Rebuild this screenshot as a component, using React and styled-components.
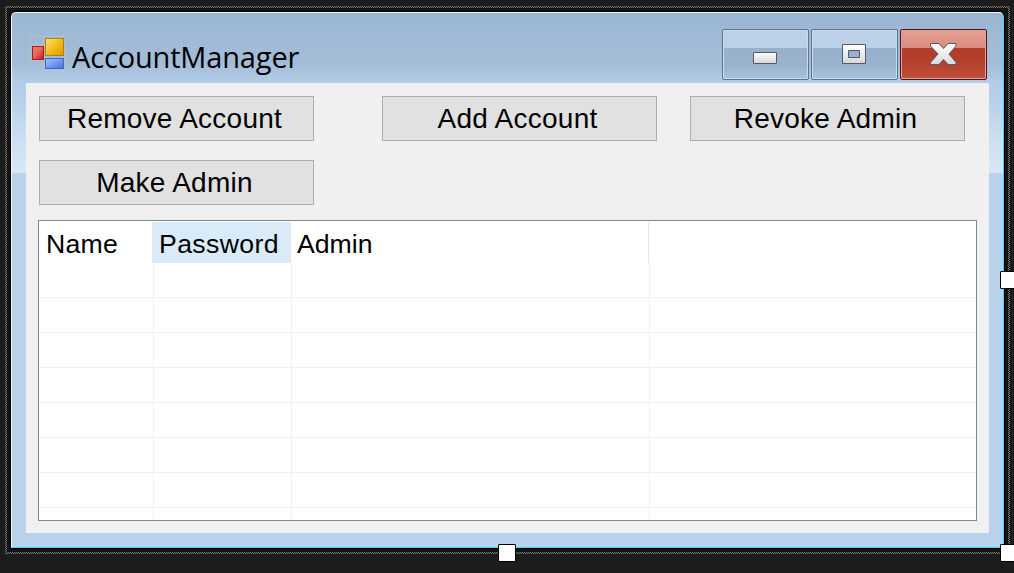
import React from 'react';
import styled, { createGlobalStyle } from 'styled-components';

const GlobalStyle = createGlobalStyle`
  *, *::before, *::after { box-sizing: border-box; }
  body { margin: 0; background: #1c1c1c; overflow: hidden; }
`;

const Surface = styled.main`
  position: relative;
  width: 1014px;
  height: 573px;
  overflow: hidden;
  padding: 6px 4px 19px 5px;
  background: #1c1c1c;
  font-family: 'Liberation Sans', Arial, sans-serif;
  color: #000;
`;

const Selection = styled.div`
  height: 548px;
  padding: 6px;
  background:
    linear-gradient(#141414, #141414) 2px 2px / calc(100% - 4px) calc(100% - 4px) no-repeat,
    repeating-conic-gradient(#777 0 25%, #1c1c1c 0 50%) 0 0 / 2px 2px;
`;

const Window = styled.section`
  display: flex;
  flex-direction: column;
  height: 536px;
  border: 1px solid;
  border-color: #f4faff #45d8f5 #45d8f5 #f4faff;
  border-radius: 5px 5px 0 0;
  padding: 0 14px 14px 14px;
  box-shadow: 0 0 0 1px #000;
  background: linear-gradient(
    #9ab6d4 0,
    #a2bbd7 37px,
    #a3bdd9 51px,
    #b3cde8 69px,
    #b8d1ea 89px,
    #cbdef1 124px,
    #dae7f5 159px,
    #b9d1ea 161px,
    #b9d1ea 100%
  );
`;

const TitleBar = styled.header`
  display: flex;
  align-items: flex-start;
  flex: 0 0 70px;
  padding: 16px 2px 0 4px;
`;

const AppIcon = styled.svg`
  display: block;
  flex: none;
  margin-top: 7px;
`;

const Title = styled.h1`
  flex: 1;
  margin: 8px 0 0 7px;
  font: 400 29px/40px 'Open Sans', 'Noto Sans', sans-serif;
  letter-spacing: -0.16px;
  white-space: nowrap;
`;

const Controls = styled.div`
  display: flex;
  gap: 2px;
`;

const ControlButton = styled.button`
  display: block;
  width: 87px;
  height: 51px;
  padding: 0;
  border: 1px solid ${(p) => (p.$danger ? '#4b1520' : '#5d7391')};
  border-radius: 2px;
  box-shadow: inset 0 0 0 1px ${(p) => (p.$danger ? '#e6a196' : '#c8dcf0')};
  background: ${(p) =>
    p.$danger
      ? 'linear-gradient(#e3a094 0, #dc8b7e 18px, #b43d2a 18px, #b33e2b 30px, #c1503a 100%)'
      : 'linear-gradient(#bdd2e8 0, #bad0e7 18px, #98b0cc 18px, #99b2ce 35px, #a9c3df 100%)'};
  svg { display: block; }
`;

const Client = styled.div`
  flex: 1;
  padding: 13px 11px 12px 12px;
  background: #f0f0f0;
`;

const Actions = styled.div`
  display: grid;
  grid-template-columns: 275px 275px 275px;
  column-gap: 33px;
  row-gap: 19px;
  margin-left: 1px;
  margin-bottom: 15px;
`;

const ActionButton = styled.button`
  width: 275px;
  height: 45px;
  margin-left: ${(p) => p.$shift || 0}px;
  padding: 1px 4px 0 0;
  border: 1px solid #adadad;
  background: #e1e1e1;
  color: #000;
  font: 28px/42px 'Liberation Sans', Arial, sans-serif;
  letter-spacing: 0.25px;
  white-space: nowrap;
`;

const ListView = styled.div`
  display: flex;
  flex-direction: column;
  width: 939px;
  height: 301px;
  padding: 1px;
  border: 1px solid #828790;
  background: #fff;
`;

const HeaderRow = styled.div`
  display: grid;
  grid-template-columns: 112px 139px 358px 1fr;
  grid-template-rows: 41px;
  flex: 0 0 41px;
`;

const HeaderCell = styled.div`
  height: 41px;
  padding: 2px 0 0 ${(p) => p.$inset}px;
  border-right: ${(p) => (p.$divider ? '1px solid #e5e5e5' : 'none')};
  background: ${(p) => (p.$hot ? '#d9ebf9' : 'transparent')};
  font-size: 26.67px;
  line-height: 41px;
  letter-spacing: ${(p) => p.$tracking || 0}px;
  white-space: nowrap;
`;

const Rows = styled.div`
  flex: 1;
  overflow: hidden;
`;

const Row = styled.div`
  display: grid;
  grid-template-columns: 114px 138px 358px 1fr;
  height: 35px;
  border-bottom: 1px solid #f0f0f0;
`;

const Cell = styled.div`
  border-right: 1px solid ${(p) => (p.$last ? 'transparent' : '#f0f0f0')};
`;

const Handle = styled.i`
  position: absolute;
  left: ${(p) => p.$x}px;
  top: ${(p) => p.$y}px;
  width: 18px;
  height: 18px;
  border: 1px solid #000;
  border-radius: 1px;
  background: #fff;
`;

const FormIcon = () => (
  <AppIcon width="35" height="34" viewBox="0 0 35 34">
    <defs>
      <linearGradient id="gold" x2="1" y2="1">
        <stop stopColor="#ffe36c" /><stop offset=".5" stopColor="#f3bd18" /><stop offset="1" stopColor="#d99a00" />
      </linearGradient>
      <linearGradient id="red" x2="1" y2="1">
        <stop stopColor="#f08078" /><stop offset=".5" stopColor="#e2655d" /><stop offset="1" stopColor="#b51616" />
      </linearGradient>
      <linearGradient id="blue" x2="1" y2="1">
        <stop stopColor="#a3c4ff" /><stop offset="1" stopColor="#3f72e0" />
      </linearGradient>
    </defs>
    <path d="M.5 33.500V.500H34.500V33M13.500 1v9M1 9.500h13M1 24.500h13M13.500 24v9M1 32.500h13" fill="none" stroke="#b9bdc4" />
    <rect x="2.5" y="10.5" width="11" height="13" fill="url(#red)" stroke="#b5141d" />
    <rect x="15.5" y="2.5" width="18" height="17" fill="url(#gold)" stroke="#ad8118" />
    <rect x="15.5" y="22.5" width="18" height="10" fill="url(#blue)" stroke="#4467b5" />
  </AppIcon>
);

const Glyph = ({ kind }) => (
  <svg width="85" height="49" viewBox="0 0 85 49">
    <defs>
      <linearGradient id={`metal-${kind}`} x2="0" y2="1">
        <stop stopColor="#fff" /><stop offset="1" stopColor="#d5d8dc" />
      </linearGradient>
    </defs>
    <g fill={`url(#metal-${kind})`} stroke="#545965">
      {kind === 'min' && <rect x="30.5" y="22.5" width="23" height="11" rx=".5" />}
      {kind === 'max' && (
        <path fillRule="evenodd" d="M30.500 14.500h23v19h-23zM36.500 20.500v7h11v-7z" />
      )}
      {kind === 'close' && (
        <path d="M29.500 13.500h8.500l4.500 5 4.500-5h8v2.500l-7 8 7 8.500v2h-8l-4.500-5-4.500 5h-8.500v-2l7.500-8.500-7.500-8z" />
      )}
    </g>
  </svg>
);

const columns = [
  { label: 'Name', inset: 6, tracking: 0.2 },
  { label: 'Password', inset: 7, hot: true, tracking: 0.35 },
  { label: 'Admin', inset: 6, divider: true },
];

export default function App() {
  return (
    <Surface>
      <GlobalStyle />
      <Selection>
        <Window>
          <TitleBar>
            <FormIcon />
            <Title>AccountManager</Title>
            <Controls>
              <ControlButton aria-label="Minimize"><Glyph kind="min" /></ControlButton>
              <ControlButton aria-label="Maximize"><Glyph kind="max" /></ControlButton>
              <ControlButton $danger aria-label="Close"><Glyph kind="close" /></ControlButton>
            </Controls>
          </TitleBar>
          <Client>
            <Actions>
              <ActionButton>Remove Account</ActionButton>
              <ActionButton $shift={35}>Add Account</ActionButton>
              <ActionButton $shift={35}>Revoke Admin</ActionButton>
              <ActionButton>Make Admin</ActionButton>
            </Actions>
            <ListView>
              <HeaderRow>
                {columns.map((c) => (
                  <HeaderCell key={c.label} $inset={c.inset} $hot={c.hot} $divider={c.divider} $tracking={c.tracking}>{c.label}</HeaderCell>
                ))}
              </HeaderRow>
              <Rows>
                {Array.from({ length: 8 }, (_, i) => (
                  <Row key={i}><Cell /><Cell /><Cell /><Cell $last /></Row>
                ))}
              </Rows>
            </ListView>
          </Client>
        </Window>
      </Selection>
      <Handle $x={1000} $y={271} />
      <Handle $x={498} $y={544} />
      <Handle $x={1000} $y={544} />
    </Surface>
  );
}
